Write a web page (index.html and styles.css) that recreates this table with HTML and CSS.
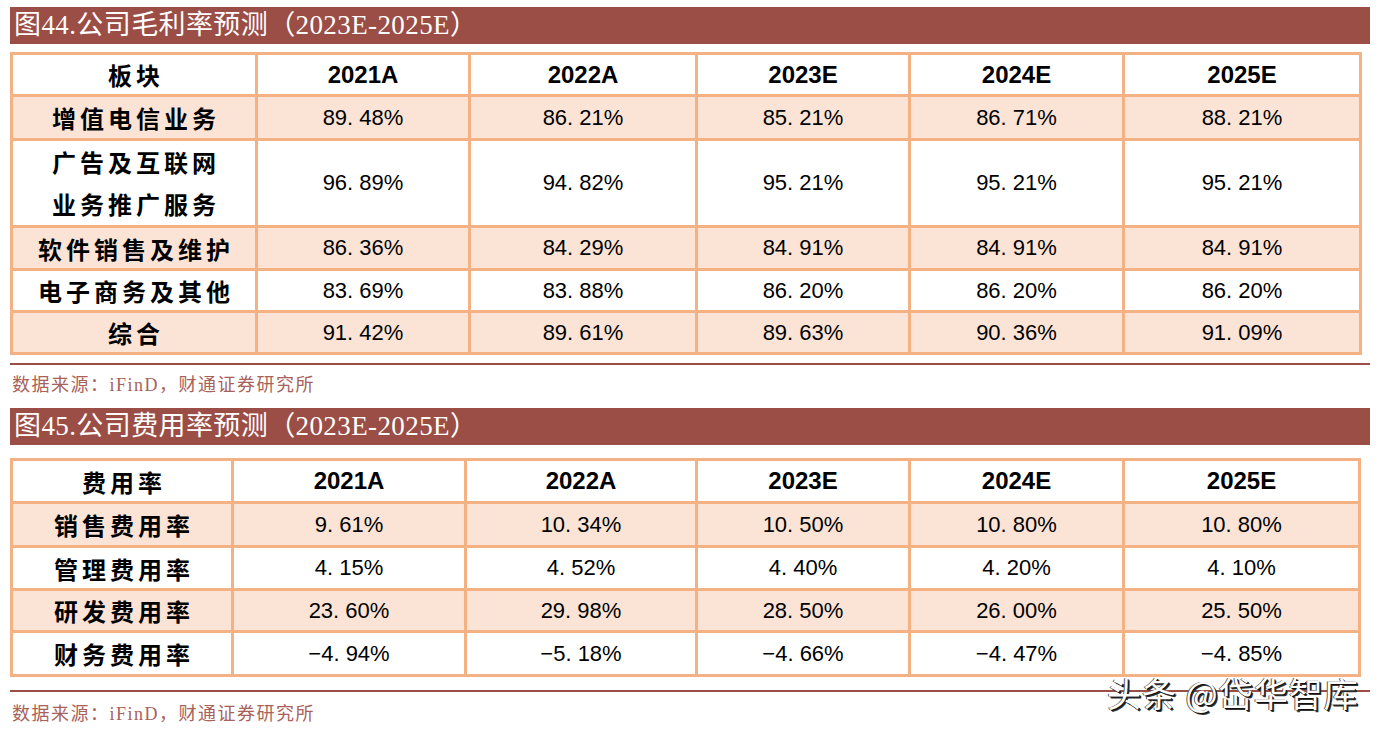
FILE: index.html
```html
<!DOCTYPE html>
<html lang="zh-CN">
<head>
<meta charset="utf-8">
<title>公司毛利率与费用率预测</title>
<link rel="stylesheet" href="styles.css">
</head>
<body>
<div class="page">
  <div class="fig-title">图44.公司毛利率预测（2023E-2025E）</div>
  <table class="data t1">
    <colgroup>
      <col style="width:245px"><col style="width:213px"><col style="width:227px"><col style="width:213px"><col style="width:214px"><col style="width:237px">
    </colgroup>
    <tr class="head h42"><th class="cn">板块</th><th>2021A</th><th>2022A</th><th>2023E</th><th>2024E</th><th>2025E</th></tr>
    <tr class="alt h44"><td class="cn">增值电信业务</td><td>89. 48%</td><td>86. 21%</td><td>85. 21%</td><td>86. 71%</td><td>88. 21%</td></tr>
    <tr class="h84"><td class="cn two">广告及互联网<br>业务推广服务</td><td>96. 89%</td><td>94. 82%</td><td>95. 21%</td><td>95. 21%</td><td>95. 21%</td></tr>
    <tr class="alt h43"><td class="cn">软件销售及维护</td><td>86. 36%</td><td>84. 29%</td><td>84. 91%</td><td>84. 91%</td><td>84. 91%</td></tr>
    <tr class="h42"><td class="cn">电子商务及其他</td><td>83. 69%</td><td>83. 88%</td><td>86. 20%</td><td>86. 20%</td><td>86. 20%</td></tr>
    <tr class="alt h42"><td class="cn">综合</td><td>91. 42%</td><td>89. 61%</td><td>89. 63%</td><td>90. 36%</td><td>91. 09%</td></tr>
  </table>
  <div class="rule r1"></div>
  <div class="source s1">数据来源：iFinD，财通证券研究所</div>

  <div class="fig-title t2title">图45.公司费用率预测（2023E-2025E）</div>
  <table class="data t2">
    <colgroup>
      <col style="width:221px"><col style="width:233px"><col style="width:231px"><col style="width:213px"><col style="width:214px"><col style="width:236px">
    </colgroup>
    <tr class="head h43"><th class="cn">费用率</th><th>2021A</th><th>2022A</th><th>2023E</th><th>2024E</th><th>2025E</th></tr>
    <tr class="alt h44"><td class="cn">销售费用率</td><td>9. 61%</td><td>10. 34%</td><td>10. 50%</td><td>10. 80%</td><td>10. 80%</td></tr>
    <tr class="h43"><td class="cn">管理费用率</td><td>4. 15%</td><td>4. 52%</td><td>4. 40%</td><td>4. 20%</td><td>4. 10%</td></tr>
    <tr class="alt h42"><td class="cn">研发费用率</td><td>23. 60%</td><td>29. 98%</td><td>28. 50%</td><td>26. 00%</td><td>25. 50%</td></tr>
    <tr class="h44"><td class="cn">财务费用率</td><td>−4. 94%</td><td>−5. 18%</td><td>−4. 66%</td><td>−4. 47%</td><td>−4. 85%</td></tr>
  </table>
  <div class="rule r2"></div>
  <div class="source s2">数据来源：iFinD，财通证券研究所</div>

  <div class="watermark">头条 @岱华智库</div>
</div>
</body>
</html>
```
FILE: styles.css
```css
html, body {
  margin: 0;
  padding: 0;
  background: #ffffff;
}
.page {
  position: relative;
  width: 1384px;
  height: 731px;
  box-sizing: border-box;
  padding: 7px 14px 0 10px;
  overflow: hidden;
}
.fig-title {
  height: 37px;
  width: 1360px;
  background: #9b4e46;
  color: #ffffff;
  font-family: "Liberation Serif", "Noto Sans CJK SC", serif;
  font-size: 27px;
  letter-spacing: 0.4px;
  line-height: 37px;
  padding-left: 4px;
  box-sizing: border-box;
  white-space: nowrap;
}
.data {
  border-collapse: collapse;
  table-layout: fixed;
  margin-top: 8px;
  width: 1349px;
}
.t2 {
  margin-top: 13px;
  width: 1348px;
}
.data th, .data td {
  border: 3px solid #f4b183;
  padding: 0;
  text-align: center;
  vertical-align: middle;
  color: #000000;
  white-space: nowrap;
}
.data td {
  font-family: "Liberation Sans", "Noto Sans CJK SC", sans-serif;
  font-size: 22px;
}
.data th {
  font-family: "Liberation Sans", "Noto Sans CJK SC", sans-serif;
  font-size: 24px;
  font-weight: 700;
}
.data .cn {
  font-family: "Noto Sans CJK SC", sans-serif;
  font-size: 24px;
  font-weight: 700;
  letter-spacing: 4px;
  padding-left: 4px;
}
.data .two {
  line-height: 42px;
}
.alt td {
  background: #fbe4d6;
}
.h41 { height: 41px; }
.h42 { height: 42px; }
.h43 { height: 43px; }
.h44 { height: 44px; }
.h84 { height: 84px; }
.rule {
  width: 1360px;
  height: 2px;
  background: #9b4e46;
}
.r1 { margin-top: 8px; }
.r2 { margin-top: 13px; }
.source {
  font-family: "Liberation Serif", "Noto Sans CJK SC", serif;
  font-size: 18px;
  letter-spacing: 1.5px;
  color: #a8625a;
  line-height: 24px;
  padding-left: 2px;
}
.s1 { margin-top: 8px; }
.s2 { margin-top: 10px; }
.t2title { margin-top: 11px; }
.watermark {
  position: absolute;
  left: 1107px;
  top: 676px;
  font-family: "Noto Sans CJK SC", sans-serif;
  font-size: 34px;
  line-height: 34px;
  color: #ffffff;
  letter-spacing: 1px;
  text-shadow: 1px 1px 0 #111, 2px 2px 0 #333, -1px 0 0 #555;
  white-space: nowrap;
}
```
